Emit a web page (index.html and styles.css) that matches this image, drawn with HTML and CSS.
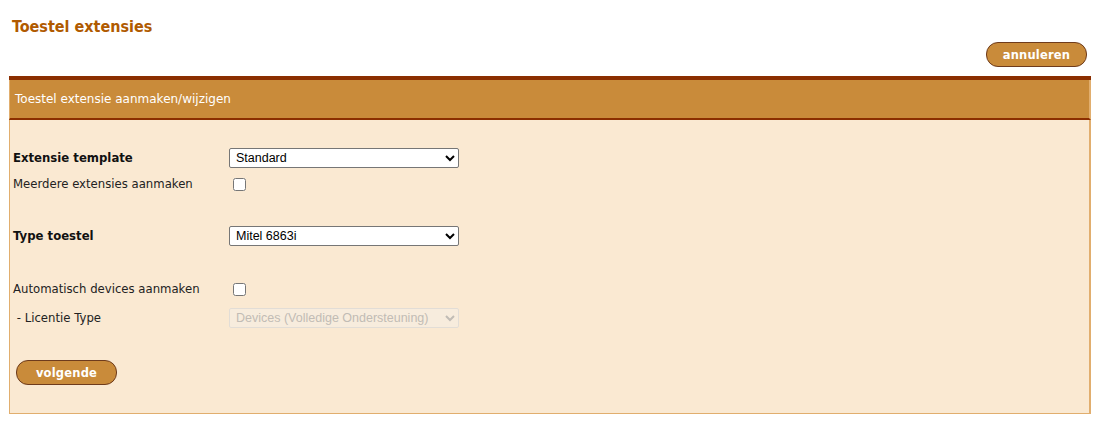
FILE: index.html
```html
<!DOCTYPE html>
<html>
<head>
<meta charset="utf-8">
<link rel="stylesheet" href="styles.css">
</head>
<body>
<div class="page">
  <h1 class="title">Toestel extensies</h1>
  <div class="toolbar">
    <button class="btn">annuleren</button>
  </div>
  <div class="panel">
    <div class="panel-head">Toestel extensie aanmaken/wijzigen</div>
    <div class="panel-body">
      <div class="row row-first">
        <label class="lbl strong">Extensie template</label>
        <select class="sel"><option>Standard</option></select>
      </div>
      <div class="row">
        <label class="lbl">Meerdere extensies aanmaken</label>
        <input type="checkbox" class="chk">
      </div>
      <div class="row row-gap">
        <label class="lbl strong">Type toestel</label>
        <select class="sel"><option>Mitel 6863i</option></select>
      </div>
      <div class="row row-gap2">
        <label class="lbl">Automatisch devices aanmaken</label>
        <input type="checkbox" class="chk">
      </div>
      <div class="row row-lic">
        <label class="lbl">&nbsp;- Licentie Type</label>
        <select class="sel" disabled><option>Devices (Volledige Ondersteuning)</option></select>
      </div>
      <div class="actions">
        <button class="btn">volgende</button>
      </div>
    </div>
  </div>
</div>
</body>
</html>
```
FILE: styles.css
```css
html, body {
  margin: 0;
  padding: 0;
  background: #ffffff;
}
.page {
  padding: 0 8px 0 9px;
  font-family: "DejaVu Sans", Verdana, sans-serif;
}
.title {
  margin: 0;
  padding: 17px 0 0 3px;
  font-family: "DejaVu Sans Condensed", "DejaVu Sans", sans-serif;
  font-size: 16px;
  line-height: 20px;
  font-weight: bold;
  color: #b05a00;
}
.toolbar {
  display: flex;
  justify-content: flex-end;
  padding: 5px 4px 9px 0;
}
.btn {
  background: #c98b3a;
  color: #ffffff;
  border: 1px solid #6e3b1c;
  border-radius: 12px;
  font-family: "DejaVu Sans", Verdana, sans-serif;
  font-weight: bold;
  font-size: 11.5px;
  height: 25px;
  width: 101px;
  padding: 0;
  letter-spacing: 0.2px;
}
.panel {
  border-top: 4px solid #8b2e00;
}
.panel-head {
  background: #c98b3a;
  color: #ffffff;
  font-size: 12px;
  height: 38px;
  line-height: 38px;
  padding-left: 5px;
  border-left: 1px solid #e1ae6e;
  border-right: 2px solid #e1ae6e;
  border-bottom: 2px solid #8b2e00;
}
.panel-body {
  background: #fae9d2;
  border-left: 1px solid #e1ae6e;
  border-right: 2px solid #e1ae6e;
  border-bottom: 1px solid #e1ae6e;
  padding: 27px 0 28px 3px;
  font-size: 11.7px;
  color: #222222;
}
.row {
  display: flex;
  align-items: center;
  height: 26px;
}
.row-first {
  height: 22px;
  margin-bottom: 2px;
}
.row-gap {
  margin-top: 28px;
  height: 22px;
}
.row-gap2 {
  margin-top: 29px;
}
.row-lic {
  margin-top: 3px;
}
.lbl {
  width: 216px;
  flex: none;
}
.strong {
  font-weight: bold;
  color: #111111;
}
.sel {
  width: 230px;
  height: 20px;
  font-family: "Liberation Sans", Arial, sans-serif;
  font-size: 12.5px;
  border: 1px solid #767676;
  border-radius: 2px;
  background: #ffffff;
  color: #000000;
  padding: 0 0 0 2px;
}
.sel:disabled {
  color: #a9a9a9;
  border-color: #d9d9d9;
  background: #f7eee2;
}
.chk {
  margin: 0 0 0 4px;
  width: 13px;
  height: 13px;
}
.actions {
  padding-top: 29px;
  padding-left: 3px;
}
```
